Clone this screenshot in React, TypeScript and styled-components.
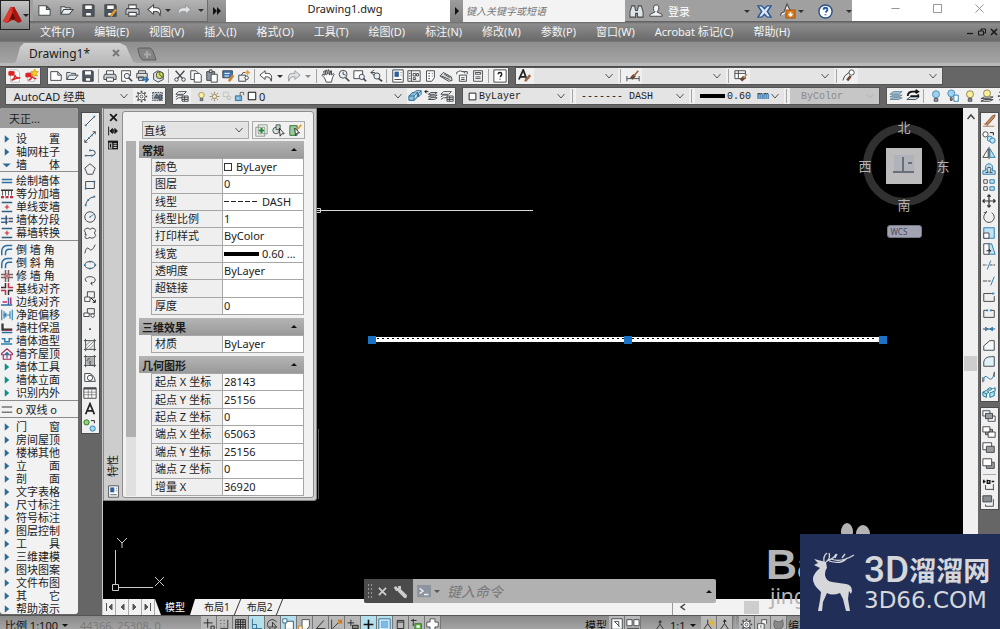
import React from 'react';
import styled, { createGlobalStyle, css } from 'styled-components';

const GlobalStyle = createGlobalStyle`
  * { box-sizing: border-box; }
  body { margin: 0; background: #666; overflow: hidden; }
  body, button, input, select {
    font-family: "Noto Sans", "Noto Sans CJK SC", sans-serif;
    font-size: 11px;
    color: #1c1c1c;
  }
  button, input, select { margin: 0; padding: 0; border: 0; border-radius: 0; background: none; outline: 0; }
`;

/* ---------- icons ---------- */

const K = '#464a4e';
const B = '#2f7fae';
const L = '#bfe3f3';

const glyphs: Record<string, React.ReactNode> = {
  new: <path d="M2 3h8l4 4v6H2zM10 3v4h4" fill="#fff" />,
  open: <path d="M2 12V4h4l1 1h5v2M2 12l3-5h10l-4 5z" fill="#e8eef2" />,
  save: <g><path d="M2 2h11l1 1v11H2z" fill="#4c5661" /><path d="M4 2h8v5H4zM5 10h6v4H5z" fill="#fff" /></g>,
  saveas: <g><path d="M2 2h11l1 1v11H2z" fill="#4c5661" /><path d="M4 2h8v5H4zM5 10h6v4H5z" fill="#fff" /><path d="M8 14l6-7" stroke="#e39a2c" strokeWidth="2.5" /></g>,
  print: <g><path d="M4 6V2h8v4" fill="#fff" /><path d="M2 6h12l1 2v4H1V8z" fill="#c9ccce" /><path d="M4 10h8v4H4z" fill="#fff" /></g>,
  preview: <g><path d="M13 8V2H3v12h5" fill="#fff" /><circle cx="9" cy="8" r="3" fill="#eef" /><path d="M11 10l4 4" strokeWidth="2" /></g>,
  publish: <g><path d="M4 5V2h8v3M2 5h12v5H2zM4 9h6v4H4z" fill="#dcdfe1" /><path d="M8 12h6M12 9l3 3-3 3" stroke="#2d6fb5" strokeWidth="2" /></g>,
  globe: <g><path d="M3 5l5-3 6 3v7l-6 3-5-3z" fill="#dde6ea" /><circle cx="10" cy="7" r="4" fill="#d5dd5b" /><path d="M10 3v4l3 2" stroke="#476b35" /></g>,
  undo: <path d="M7 2L1 7l6 5V9h3q3 0 4 5 2-9-4-9H7z" fill="#fff" />,
  redo: <path d="M9 2l6 5-6 5V9H6q-3 0-4 5-2-9 4-9h3z" fill="#dfe2e4" stroke="#9a9da0" />,
  cut: <g><path d="M3 2l8 9M13 2L5 11" strokeWidth="1.6" /><circle cx="4" cy="12" r="2" /><circle cx="12" cy="12" r="2" /></g>,
  copyclip: <g><path d="M2 2h6l2 2v8H2z" fill="#fff" /><path d="M6 5h6l2 2v8H6z" fill="#fff" /></g>,
  paste: <g><path d="M2 3h9v10H2z" fill="#8f969b" /><path d="M5 1h3v3H5z" fill="#ddd" /><path d="M7 6h7v9H7z" fill="#fff" /></g>,
  match: <g><path d="M2 2h11v8H2z" fill="#3b77b8" /><path d="M4 5h6M4 8h5" stroke="#fff" /><path d="M9 14l5-7" stroke="#c88235" strokeWidth="3" /></g>,
  block: <g><path d="M2 7h8v7H2zM5 7l2-3h3" /><circle cx="11" cy="10" r="2" fill="#fff" /><path d="M12 1v6M9 4h6M10 2l4 4M14 2l-4 4" stroke="#e2a050" /></g>,
  pan: <path d="M4 10L1 7l1-1 2 1L3 3l1-1 2 5-1-5 1-1 2 5V1h1l1 6 1-5h1v5l2-2 1 1-2 4-1 5H6z" fill="#fff" />,
  zoom: <g><circle cx="7" cy="6" r="4.500" fill="#e8f0f4" /><path d="M10 10l4 4" strokeWidth="2" /><path d="M7 3v3l3 1" /></g>,
  zoomwin: <g><path d="M1 2h10v9H1z" fill="#fff" /><circle cx="10" cy="9" r="3" fill="#eef" /><path d="M12 11l3 3" strokeWidth="2" /></g>,
  zoomprev: <g><circle cx="9" cy="8" r="3.500" fill="#e8f0f4" /><path d="M11 11l4 3" strokeWidth="2" /><path d="M6 1L2 4l4 3M2 4h5" /></g>,
  props: <g><path d="M2 1h12v14H2z" fill="#fff" /><path d="M4 3h5v6H4z" fill="#2f609c" stroke="none" /><path d="M11 4h1M11 7h1M4 12h8" /></g>,
  dcenter: <g><path d="M1 2h14v12H1z" fill="#fff" /><path d="M5 2v12M7 5h3v3H7zM11 5h2v3h-2zM7 10h3v2H7zM2 5h2M2 8h2M2 11h2" /></g>,
  palette: <g><path d="M4 2h9v8l-3 4H4z" fill="#fff" /><path d="M6 5h2M6 8h2M6 11h2M10 5h1M10 8h1" /></g>,
  sheet: <path d="M1 8l4-4 9 5 1 4-4 1zM3 8l9 4M6 6l7 4" fill="#ddd" />,
  markup: <g><path d="M2 6q-1-3 2-3 2-2 4 0 3-1 3 2M5 7h8v7H5z" fill="#fff" /><path d="M7 10h4M7 12h4M10 3h4v3" /></g>,
  calc: <g><path d="M3 2h10v12H3z" fill="#fff" /><path d="M5 4h6v2H5zM5 9h6M5 11h6" /></g>,
  help: <g><path d="M1 1h14v14H1z" fill="#fff" /><path d="M6 6q0-2 2-2t2 2q0 1-2 3M8 11v1" strokeWidth="1.700" stroke="#222" /></g>,
  pdf: <g><path d="M3 1h7l3 3v11H3z" fill="#fff" stroke="#bbb" /><path d="M1 3h6v4H1z" fill="#d22" stroke="#d22" /><path d="M4 13q4-3 4-6 1 4 6 3-5 0-10 3" stroke="#d22" strokeWidth="1.500" /></g>,
  pdfstar: <g><path d="M3 4h8v10H3z" fill="#fff" stroke="#bbb" /><path d="M1 5h6v4H1z" fill="#d22" stroke="#d22" /><path d="M4 13q4-2 4-5 1 3 5 3" stroke="#d22" strokeWidth="1.500" /><path d="M11 0l1 3 3 0-2 2 1 3-3-1-3 1 1-3-2-2 3 0z" fill="#ffd02c" stroke="#e0a010" /></g>,
  gear: <g><path d="M8 1v2M8 13v2M1 8h2M13 8h2M3 3l1.500 1.500M11.500 11.500L13 13M13 3l-1.500 1.500M3 13l1.500-1.500" strokeWidth="2" /><circle cx="8" cy="8" r="4.500" fill="#fff" /><circle cx="8" cy="8" r="1.800" /></g>,
  wsset: <g><path d="M2 3h12v10H2z" fill="#b9c2ca" strokeDasharray="2 1" /><path d="M4 10l3-5 3 5zM10 6h3v6h-3z" fill="#687685" /></g>,
  layers: <g><path d="M1 6l3-3h9l-3 3zM1 9l3-2h5M1 12l3-2h4" fill="#fff" /><path d="M8 8h7v6H8z" fill="#fff" /><path d="M8 10h7M8 12h7M11 8v6" /></g>,
  bulb: <g><circle cx="8" cy="6" r="4" fill="#fbf09a" stroke="#8e8450" /><path d="M6 11h4v3H6z" fill="#999" /></g>,
  bulbblue: <g><circle cx="8" cy="6" r="4" fill="#9fd0ee" stroke="#4d8fb8" /><path d="M6 11h4v3H6z" fill="#aaa" /></g>,
  bulbpage: <g><circle cx="6" cy="5" r="4" fill="#9fd0ee" stroke="#4d8fb8" /><path d="M5 10h2v3H5z" fill="#aaa" /><path d="M9 7h5v7H9z" fill="#fff" stroke={B} /></g>,
  bulblay: <g><path d="M1 11l4-2h10l-4 2zM1 14l4-2h10l-4 2z" fill="#ddd" /><circle cx="8" cy="5" r="4" fill="#fbf09a" stroke="#8e8450" /></g>,
  sun: <g><circle cx="8" cy="8" r="3" fill="#fdf0c0" stroke="#7c6a48" /><path d="M8 1v3M8 12v3M1 8h3M12 8h3M3 3l2 2M11 11l2 2M13 3l-2 2M3 13l2-2" stroke="#7c6a48" /></g>,
  frzvp: <g stroke="#b5b5b5"><path d="M2 2h8v7H2z" fill="#e4e4e4" /><circle cx="11" cy="11" r="3" fill="#ddd" /></g>,
  lock: <g><path d="M2 7h9v7H2z" fill="#6fb2dc" stroke="#255d83" /><path d="M9 7V2h5v4" /><path d="M6 9v3" stroke="#fff" /></g>,
  sq: <path d="M2 2h12v12H2z" fill="#fff" stroke="#111" strokeWidth="1.600" />,
  cubes: <g stroke="#286692"><path d="M1 8l4-4h6l-4 4zM1 8v5h6V8M7 13l4-4V4" fill="#8cc4e2" /><path d="M6 5l3-3h6l-3 3v4l3-3V2" fill="#b9def0" /></g>,
  layprev: <g><path d="M5 6l3-2h7l-3 2zM5 9l3-2h7l-3 2zM5 12l3-2h7l-3 2z" fill="#fff" /><path d="M1 3h4M1 3l2-2M1 3l2 2" stroke="#111" /></g>,
  stack: <path d="M1 6l4-3h10l-4 3zM1 9l4-2h10l-4 2zM1 12l4-2h10l-4 2z" fill="#9cc5dd" stroke="#6d8a9a" />,
  stackblk: <g><path d="M1 12l4-3h10l-4 3z" fill="#cfe6f2" /><path d="M2 8q0-5 6-5h5M11 1l3 2-3 2M5 8h9V6" stroke="#111" strokeWidth="2" /></g>,
  asty: <g><path d="M1 12L6 1l4 11M3 9h5" strokeWidth="2" stroke="#222" /><path d="M8 14l6-7" stroke="#9a6a48" strokeWidth="3" /></g>,
  dimsty: <g><path d="M1 8v6M15 8v6M1 11h14" /><path d="M6 11l4-4" stroke="#6e4630" strokeWidth="4" /><path d="M9 8l5-6" stroke="#9a6a48" strokeWidth="2" /></g>,
  tabsty: <g><path d="M1 2h12v9H1zM1 5h12M5 2v9" fill="#fff" /><path d="M8 13l4-4" stroke="#6e4630" strokeWidth="4" /><path d="M11 10l4-4" stroke="#c9a080" strokeWidth="2" /></g>,
  mlsty: <g><circle cx="11" cy="4" r="3" fill="#fff" /><path d="M1 13l2-5 5-4" /><path d="M6 13l4-5" stroke="#6e4630" strokeWidth="3" /></g>,

  line: <g><path d="M3 13L13 3" /><path d="M2 13h2M12 3h2" strokeWidth="2" stroke={B} /></g>,
  xline: <g><path d="M2 14L14 2M2 14v-3M2 14h3M14 2v3M14 2h-3" /><path d="M6 9h2M9 6h2" strokeWidth="2" stroke={B} /></g>,
  pline: <g><path d="M3 11h7q4 0 4-3t-3-3H8" /><path d="M2 11h2M7 5h2M9 11h2" strokeWidth="2" stroke={B} /></g>,
  poly: <path d="M8 2l6 5-3 7H5L2 7z" />,
  rect: <g><path d="M3 4h10v8H3z" /><path d="M2 12h2M12 4h2" strokeWidth="2" stroke={B} /></g>,
  arc: <g><path d="M3 13Q4 5 13 3" /><path d="M2 13h2M5 7h2M12 3h2" strokeWidth="2" stroke={B} /></g>,
  circle: <g><circle cx="8" cy="8" r="6" /><path d="M8 8l4-3M7 8h2" stroke={B} /></g>,
  cloud: <path d="M3 8Q0 5 3 3t5 1q2-3 5-1t0 5q3 3 0 5t-5 0q-3 2-5 1-2-2 1-4Q1 10 3 8z" />,
  spline: <path d="M2 13q2-9 5-5t7-5" />,
  ellipse: <g><ellipse cx="8" cy="8" rx="6" ry="4" /><path d="M1 8h2M13 8h2M7 4h2M7 12h2" strokeWidth="2" stroke={B} /></g>,
  ellarc: <path d="M4 9q-4-5 3-6 7 0 7 4 0 3-5 4M9 11l1-2M9 11l2 2" />,
  insert: <g><path d="M5 2h8v7H5z" /><path d="M2 8h6v5H2z" fill="#fff" /><path d="M9 9l5 5M14 14v-3M14 14h-3" stroke="#111" /></g>,
  mkblock: <g><path d="M5 3h8v6H5z" /><path d="M1 8h6v4H1z" fill="#fff" /><circle cx="11" cy="11" r="2" fill="#fff" /></g>,
  point: <path d="M7 8h2" strokeWidth="2" />,
  hatch: <g><path d="M1 3h14M1 13h14M3 1v14M13 1v14" /><path d="M3 9l6-6M3 13L13 3M7 13l6-6" stroke="#888" /></g>,
  gradient: <g><path d="M4 4h8v8H4z" fill="#aaa" stroke="none" /><path d="M1 3h14M1 13h14M3 1v14M13 1v14M4 8l4-4M8 8v5h5" /></g>,
  region: <g><path d="M2 13V4h6q5 2 6 9z" fill="#fff" /><circle cx="8" cy="9" r="3" /></g>,
  table: <g><path d="M1 2h14v12H1z" fill="#fff" /><path d="M1 3h14" strokeWidth="2" /><path d="M1 7h14M1 10h14M6 4v10M10 4v10" stroke="#888" /></g>,
  text: <path d="M3 14L8 2l5 12M5 10h6" strokeWidth="2" stroke="#222" />,
  addsel: <g><circle cx="4" cy="5" r="3" fill="#9bd080" stroke="#2b7b1e" /><path d="M9 3h4v3" stroke="#222" /><circle cx="11" cy="12" r="3" fill="#a8daf0" stroke={B} /></g>,

  erase: <g><path d="M4 11L12 2l3-1-1 3-7 8z" fill="#c98655" stroke="#8b5a38" /><path d="M2 11l5 3M1 14h13" stroke="#b08055" /></g>,
  copyobj: <g><circle cx="4" cy="5" r="3" fill="#fff" /><path d="M9 3h4v3" stroke="#111" /><circle cx="9" cy="10" r="3" fill={L} stroke={B} /><circle cx="12" cy="12" r="3" fill={L} stroke={B} /></g>,
  mirror: <g><path d="M7 3v10H1z" fill="#fff" /><path d="M9 3v10h6z" fill={L} stroke={B} /><path d="M8 1v14" /></g>,
  offset: <g><path d="M1 14v-4h3Q3 2 8 2t4 8h3v4z" fill={L} stroke={B} /><path d="M4 12h3Q4 6 8 6t1 6h3" /></g>,
  array: <g><path d="M2 2h4v4H2zM2 10h4v4H2z" fill="#fff" /><path d="M9 2h5v4H9zM9 10h5v4H9z" fill={L} stroke={B} /></g>,
  move: <path d="M8 1v14M1 8h14M6 3l2-2 2 2M6 13l2 2 2-2M3 6L1 8l2 2M13 6l2 2-2 2" stroke="#333" strokeWidth="1.400" />,
  rotate: <path d="M5 3a6 6 0 1 0 6 0M5 3V1M5 3H2" />,
  scale: <g><path d="M2 2h12v12H2z" fill={L} stroke={B} /><path d="M2 8h6v6H2z" fill="#fff" /></g>,
  stretch: <g><path d="M7 2h4l4 12H7z" fill={L} stroke={B} /><path d="M2 2h6v12H2z" fill="#fff" /><path d="M5 10h5M8 8l2 2-2 2" stroke="#222" /></g>,
  trim: <g><path d="M1 8h5M9 8h6" strokeDasharray="3 1" /><path d="M10 3L6 13" stroke={B} /></g>,
  extend: <g><path d="M1 8h9" strokeDasharray="5 1" /><path d="M14 3l-4 10" stroke={B} /></g>,
  brk1: <g><path d="M2 13V4h9M2 13h12V7" /><path d="M11 4h3" stroke={B} strokeWidth="2" /></g>,
  brk: <g><path d="M6 5H2v8h12V5h-4" /><path d="M5 5h2M9 5h2" strokeWidth="2" stroke={B} /></g>,
  join: <g><path d="M1 8h14" /><path d="M4 6l3 2-3 2zM12 6L9 8l3 2z" fill={B} stroke={B} /></g>,
  chamfer: <path d="M2 14V9l7-6h5v11z" fill="#f2fafd" />,
  fillet: <path d="M2 14V9q1-6 9-6h3v11z" fill="#def1f9" />,
  blend: <g><path d="M2 13q0-9 5-4t7-6" stroke={B} /><path d="M1 14V8M14 8V2" /></g>,
  explode: <path d="M1 7l4-2 3 2-3 2zM1 7v4l4 2V9M6 4l3-2 3 1-3 2zM9 8l5-2v5l-5 2zM13 3l2-1v4" fill={L} stroke="#197896" />,
  front: <g><path d="M1 2h8v6H1zM7 8h8v6H7z" fill="#fff" /><path d="M4 5h8v6H4z" fill="#9a9da0" /></g>,
  back: <g><path d="M4 5h8v6H4z" fill="#9a9da0" /><path d="M1 2h8v6H1zM7 8h8v6H7z" fill="#fff" /></g>,
  above: <g><path d="M1 2h10v8H1z" fill="#fff" /><path d="M5 6h9v7H5z" fill="#9a9da0" /></g>,
  under: <g><path d="M5 6h9v7H5z" fill="#9a9da0" /><path d="M1 2h10v8H1z" fill="#fff" /></g>,
  txtfront: <g><path d="M1 4h3M2 2v4M6 2v4h3V3H6M11 4h3" stroke="#111" strokeWidth="1.500" /><path d="M4 8v5h9M13 7v7" /></g>,
  hatchback: <g><path d="M1 2h10v7H1z" fill="#8a8d90" /><path d="M4 12v2h9V6" /></g>,

  wall: <path d="M1 6h14M1 10h14" stroke="#2d6fa5" strokeWidth="2" />,
  divide: <g><path d="M0 3h16" stroke="#333" strokeWidth="2" /><path d="M2 4v6M6 4v6M10 4v6M14 4v6" stroke="#444" /><path d="M0 12h4M6 12h4M12 12h4" stroke="#c42c48" strokeWidth="3" /></g>,
  single: <g><path d="M1 2h14M1 14h14" stroke="#2f5f83" strokeWidth="2" /><path d="M8 5v6M5 8h6" stroke="#d22a3c" strokeWidth="1.500" /></g>,
  seg: <g><path d="M0 6h9M0 11h9" stroke="#2d6fa5" strokeWidth="2" /><path d="M7 2v12M10 6h6M10 10h6" stroke="#46506e" strokeWidth="2" /></g>,
  corner: <path d="M1 15V9q1-7 8-7h6M6 15v-3q0-5 5-5h4" stroke="#2d6fa5" strokeWidth="2" />,
  cross: <g><path d="M0 6h6V0M16 6h-6V0M0 10h6v6M16 10h-6v6" stroke="#7a6060" strokeWidth="2" /><path d="M8 4v8M4 8h8" stroke="#c42c48" /></g>,
  base: <g><path d="M0 6h6V0M16 10h-6v6" stroke="#333" strokeWidth="2" /><path d="M16 6h-6V0M0 10h6v6" stroke="#c42c48" strokeWidth="2" /></g>,
  side: <g><path d="M0 12h15M10 12V2" stroke="#2d6fa5" strokeWidth="2" /><path d="M13 2v9M2 8h6" stroke="#c42c78" strokeWidth="2" /></g>,
  net: <path d="M1 1v14M15 1v14M4 3v10M5 8h7M12 3v10M7 5L5 8l2 3" stroke="#2d7fb5" strokeWidth="1.500" />,
  insul: <g><path d="M2 2v8h13" stroke="#333" strokeWidth="3" /><path d="M1 14h14" stroke="#2d6fa5" strokeWidth="2" /><path d="M5 11h9" stroke="#c42c48" /></g>,
  shape: <path d="M0 12h15M1 5h4v4h6V5h4" stroke="#2d7fb5" strokeWidth="2" />,
  roof: <g><path d="M0 8l8-7 8 7v1H0zM3 9v6h10V9" stroke="#a22c58" strokeWidth="1.500" /><path d="M8 14V6M5 9l3-3 3 3" stroke="#2d6fa5" strokeWidth="1.500" /></g>,
  dbl: <path d="M1 4h14M1 11h14" stroke="#777" strokeWidth="2" />,
  tri: <path d="M5 3l6 5-6 5z" fill="#2b6c9c" stroke="none" />,
  trig: <path d="M5 3l6 5-6 5z" fill="#0e8f86" stroke="none" />,
  trid: <path d="M2 6h11l-5.500 5z" fill="#2b6c9c" stroke="none" />,

  binoc: <path d="M1 14V8l2-6h3l1 5h2l1-5h3l2 6v6H9v-4H7v4z" fill="#dfe4e8" />,
  user: <path d="M8 1q4 0 3 5-1 3-2 3l6 3v2H1v-2l6-3q-2-1-2-4 0-4 3-4z" fill="#f2f4f5" />,
  exch: <path d="M1 2h4l3 3 3-3h4l-4 6 4 6h-4l-3-3-3 3H1l4-6z" fill="#d9e8f8" stroke="#2b5591" strokeWidth="1.500" />,
  a360: <g><path d="M1 13q-1-3 3-4l3-8 3 6" fill="#eee" /><path d="M6 7h9v8H6z" fill="#d97a1c" stroke="#a85808" /><path d="M10.500 9v4M8.500 11l2 2 2-2" stroke="#fff" strokeWidth="1.500" /></g>,
  qhelp: <g><circle cx="8" cy="8" r="7" fill="#fff" stroke="#2c4f86" strokeWidth="1.500" /><path d="M6 6q0-2 2-2t2 2q0 1-2 3M8 11v1" stroke="#2558a8" strokeWidth="2" /></g>,
  min: <path d="M3 8h10" stroke="#888" />,
  max: <path d="M3 3h10v10H3z" stroke="#888" />,
  close: <path d="M3 3l10 10M13 3L3 13" stroke="#888" />,
  dmin: <path d="M2 11h12" stroke="#151515" strokeWidth="2.500" />,
  drest: <path d="M6 6V2h9v8h-4M1 6h10v8H1z" stroke="#151515" strokeWidth="2" />,
  dclose: <path d="M2 2l12 12M14 2L2 14" stroke="#151515" strokeWidth="3" />,
  pin: <path d="M1 1v14M7 4L3 8l4 4zM11 4l4 4-4 4zM9 5v6" stroke="#151515" strokeWidth="1.500" fill="#151515" />,
  menu: <g><path d="M0 1h16v14H0z" fill="#181818" stroke="none" /><path d="M2 5h4v8H2zM9 6h5M9 9h5M9 12h5" stroke="#ddd" strokeWidth="1.500" /></g>,
  pickadd: <g><path d="M4 1h11v11H4zM1 4h11v11H1z" fill="#eef6ee" stroke="#879087" /><path d="M8 5v6M5 8h6" stroke="#218a35" strokeWidth="2.500" /></g>,
  selobj: <g><circle cx="5" cy="8" r="4" fill="#dbe8db" /><path d="M5 1h5v6H5z" fill="#bcd9bc" /><path d="M9 5l6 7h-3l-2 3z" fill="#fff" stroke="#222" /></g>,
  quick: <g><path d="M1 2h9v12H1z" fill="#9cc79c" stroke="#2e6f37" /><path d="M7 5l6 6h-3l-2 3z" fill="#fff" stroke="#222" /><path d="M11 6l4-5" stroke="#e59c1c" strokeWidth="2" /></g>,

  snap: <path d="M7 1v11M2 6h11M11 10h4v4h-4z" stroke="#222" />,
  dots: <path d="M3 3h1M7 3h1M3 7h1M7 7h1M3 11h1M7 11h1M12 2v11H3" stroke="#333" />,
  grid: <path d="M2 2h12v12H2zM2 5h12M2 8h12M2 11h12M5 2v12M8 2v12M11 2v12" stroke="#222" />,
  ortho: <path d="M3 1v12h12M3 8h5v5" stroke="#2c6a88" />,
  polar: <path d="M13 5a6 6 0 1 0 0 6M4 11h9L8 5M8 5v6" stroke="#333" />,
  osnap: <g><path d="M4 4h10v10H4z" fill="#fff" /><path d="M1 1h5v5H1z" stroke="#2c6a88" fill="#fff" /></g>,
  osnap3: <g><path d="M5 2h9v8l-3 4H5z" fill="#fff" /><path d="M1 10h4v4H1z" stroke="#d17b20" fill="#fff" /></g>,
  otrack: <path d="M12 3L3 13h11" stroke="#222" />,
  ducs: <g><path d="M2 2v12h12" stroke="#333" /><path d="M3 13l7-7" stroke="#333" /><path d="M10 7l4-4M10 3h4v4" stroke="#d17b20" strokeWidth="2" /></g>,
  dyn: <path d="M6 2v8M2 6h8M8 9h7v4H8z" stroke="#222" fill="#888" />,
  lwt: <path d="M8 2v12M2 8h12" stroke="#111" strokeWidth="2" />,
  tpy: <g><path d="M1 1h14v14H1z" fill="#d8eefa" stroke="#2c6a98" /><path d="M4 4h8v8H4z" fill="#7fbbe6" stroke="#4a8fc4" strokeDasharray="1 1" /></g>,
  qp: <path d="M4 3h8v10H4zM4 5h8" stroke="#222" />,
  sc: <g><path d="M1 3h7M4 1v9" stroke="#222" /><path d="M6 7h8v7H6z" fill="#62b54a" stroke="#2e7322" /><path d="M8 9h4v3H8z" fill="#fff" stroke="none" /></g>,
  plus: <path d="M5 1h6v4h4v6h-4v4H5v-4H1V5h4z" fill="#fff" />,
  sheetv: <g><path d="M2 2h12v12H2z" fill="#fff" /><path d="M5 5h5v6M5 5l6 6" /></g>,
  views: <path d="M1 3h6v7H1zM9 3h6v7H9zM1 13h14" fill="#fff" />,
  anno: <path d="M8 2v5l-5 7M8 7l5 7M6 4h4M8 2l2 2" stroke="#222" />,
  annoy: <g><path d="M7 2v5l-5 7M7 7l5 7" stroke="#222" /><path d="M12 1l-2 5h4l-3 5" stroke="#e7b51b" strokeWidth="2" /></g>,
  padlock: <path d="M2 7h8v7H2zM7 7V2h6v5M6 9v3" fill="#f4f4f4" />,
  orb: <path d="M3 3q7 4 10-1 3 12-5 12T3 3z" fill="#888" stroke="#666" />,
};

const Svg = styled.svg<{ $s: number }>`
  width: ${p => p.$s}px;
  height: ${p => p.$s}px;
  flex: none;
  display: block;
`;

const Icon = ({ n, s = 14 }: { n: string; s?: number }) => (
  <Svg $s={s} viewBox="0 0 16 16" fill="none" stroke={K} strokeWidth="1.100" aria-hidden="true">{glyphs[n]}</Svg>
);

/* ---------- shared parts ---------- */

const ToolButton = styled.button<{ $w?: number; $h?: number }>`
  width: ${p => p.$w ?? 16}px;
  height: ${p => p.$h ?? 16}px;
  flex: none;
  display: flex;
  align-items: center;
  justify-content: center;
`;

const Caret = styled.span<{ $c?: string }>`
  width: 0;
  height: 0;
  flex: none;
  border: 3px solid transparent;
  border-top-color: ${p => p.$c ?? '#333'};
  border-bottom: 0;
`;

const Divider = styled.span`
  width: 2px;
  height: 14px;
  margin: 0 2px;
  flex: none;
  border-left: 1px solid #a5a5a5;
`;

const Tool = ({ n, w, h, s }: { n: string; w?: number; h?: number; s?: number }) => (
  <ToolButton type="button" aria-label={n} $w={w} $h={h}><Icon n={n} s={s} /></ToolButton>
);

const Tools = ({ names, w, h, s }: { names: string; w?: number; h?: number; s?: number }) => (
  <>{names.split(' ').map((n, i) => (n === '|' ? <Divider key={i} /> : <Tool key={i} n={n} w={w} h={h} s={s} />))}</>
);

const ComboBox = styled.div<{ $w: number; $disabled?: boolean; $h?: number; $framed?: boolean }>`
  width: ${p => p.$w}px;
  height: ${p => p.$h ?? 16}px;
  flex: none;
  display: flex;
  align-items: center;
  gap: 2px;
  padding: 0 5px;
  background: ${p => (p.$disabled ? '#c6c6c6' : '#e4e4e4')};
  ${p => p.$framed && css`border: 1px solid #a9a9a9; padding: 0 5px 0 1px;`}
`;

const Select = styled.select<{ $mono?: boolean; $size?: number }>`
  appearance: none;
  flex: 1;
  min-width: 0;
  height: 100%;
  font-size: ${p => p.$size ?? 11}px;
  ${p => p.$mono && css`font-family: "Liberation Mono", monospace;`}
  &:disabled { color: #8a8a8a; opacity: 1; }
`;

const Chevron = ({ color = '#555' }: { color?: string }) => (
  <Svg $s={8} viewBox="0 0 8 8" fill="none" stroke={color} aria-hidden="true"><path d="M0.500 2L4 6l3.500-4" /></Svg>
);

type ComboProps = { w: number; h?: number; value?: string; label: string; mono?: boolean; size?: number; disabled?: boolean; framed?: boolean; children?: React.ReactNode };
const Combo = ({ w, h, value = '', label, mono, size, disabled, framed, children }: ComboProps) => (
  <ComboBox $w={w} $h={h} $disabled={disabled} $framed={framed}>
    {children}
    <Select aria-label={label} $mono={mono} $size={size} disabled={disabled}><option>{value}</option></Select>
    <Chevron color={disabled ? '#b4b4b4' : undefined} />
  </ComboBox>
);

/* ---------- header ---------- */

const Page = styled.div`
  position: relative;
  height: 100vh;
  min-height: 400px;
  display: flex;
  flex-direction: column;
  background: #666;
  overflow: hidden;
`;

const Header = styled.header`
  position: relative;
  background: linear-gradient(#a0a0a0 0 21px, #5b5b5b 21px, #8c8c8c 24px, #6b6b6b 40px);
`;

const AppButton = styled.button`
  position: absolute;
  left: 0;
  top: 0;
  width: 30px;
  height: 30px;
  display: flex;
  align-items: center;
  gap: 1px;
  padding-left: 2px;
  border: 1px solid #222;
  background: linear-gradient(#c4c4c4, #858585);
`;

const TitleRow = styled.div`
  display: flex;
  height: 22px;
  padding-left: 33px;
`;

const QuickAccess = styled.div`
  display: flex;
  align-items: center;
  width: 175px;
  background: linear-gradient(#b4b4b4, #939393);
  border: 1px solid #6c6c6c;
  border-top: 0;
  border-left: 0;
`;

const SmallDark = styled.button<{ $w: number }>`
  width: ${p => p.$w}px;
  display: flex;
  align-items: center;
  justify-content: center;
  background: linear-gradient(#9c9c9c, #808080);
`;

const RightCaret = styled.span`
  border: 4px solid transparent;
  border-left-color: #111;
  border-right: 0;
`;

const Title = styled.div`
  flex: 1;
  padding-left: 14px;
  background: #fff;
  text-align: center;
  font-size: 11px;
  line-height: 18px;
`;

const Search = styled.input`
  width: 162px;
  padding: 0 3px;
  background: #f3f3f3;
  font-size: 10px;
  font-style: italic;
  &::placeholder { color: #777; }
`;

const Account = styled.div`
  width: 227px;
  display: flex;
  align-items: center;
  padding-left: 3px;
`;

const SignIn = styled.button`
  display: flex;
  align-items: center;
  gap: 5px;
  margin: 0 auto 0 5px;
  color: #fff;
  white-space: nowrap;
`;

const WindowButtons = styled.div`
  width: 148px;
  height: 21px;
  display: flex;
  justify-content: space-around;
  align-items: flex-start;
  padding-left: 22px;
  background: #fff;
`;

const MenuRow = styled.nav`
  display: flex;
  align-items: center;
  height: 19px;
  padding: 0 0 0 40px;
  gap: 20px;
`;

const MenuItem = styled.button`
  color: #f4f4f4;
  font-size: 11px;
  line-height: 14px;
  white-space: nowrap;
`;

const DocButtons = styled.div`
  display: flex;
  margin-left: auto;
`;

const DocTabs = styled.div`
  display: flex;
  align-items: flex-end;
  height: 25px;
  padding-left: 12px;
  border-top: 1px solid #777;
  border-bottom: 3px solid #b9b9b9;
  background: linear-gradient(#8e8e8e, #a4a4a4);
`;

const DocTab = styled.div`
  display: flex;
  align-items: center;
  gap: 22px;
  width: 125px;
  height: 20px;
  padding-left: 17px;
  font-size: 12px;
  background: linear-gradient(#d2d2d2, #b9b9b9);
  clip-path: polygon(0 100%, 4px 95%, 8px 20%, 12px 0, 108px 0, 114px 15%, 121px 92%, 125px 100%);
`;

const NewTab = styled.button`
  width: 20px;
  height: 16px;
  display: flex;
`;

/* ---------- toolbars ---------- */

const Toolbars = styled.div`
  display: flex;
  flex-direction: column;
  gap: 4px;
  padding: 1px 0 4px;
  border-top: 1px solid #4a4a4a;
  background: #666;
`;

const ToolRow = styled.div`
  display: flex;
  gap: 8px;
  height: 16px;
  padding-left: 6px;
`;

const Bar = styled.div<{ $grow?: boolean }>`
  display: flex;
  align-items: center;
  flex: ${p => (p.$grow ? '1' : 'none')};
  background: #f0f0f0;
  outline: 1px solid #555;
  overflow: hidden;
`;

const DropArrow = styled.button`
  width: 12px;
  height: 16px;
  display: flex;
  align-items: center;
  justify-content: center;
`;

const Weight = styled.span<{ $w: number; $h: number }>`
  width: ${p => p.$w}px;
  height: ${p => p.$h}px;
  flex: none;
  background: #000;
`;

/* ---------- main area ---------- */

const Main = styled.main`
  flex: 1;
  min-height: 0;
  display: flex;
`;

const SidePalette = styled.aside`
  width: 78px;
  flex: none;
  display: flex;
  flex-direction: column;
  margin-bottom: 1px;
  border-radius: 3px;
  background: #f2f2f2;
  overflow: hidden;
`;

const SideTitle = styled.h2`
  margin: 0;
  padding: 2px 0 0 9px;
  height: 20px;
  flex: none;
  font-size: 11px;
  font-weight: 400;
  line-height: 17px;
  background: #9c9c9c;
`;

const SideGroup = styled.div<{ $first?: boolean }>`
  display: flex;
  flex-direction: column;
  flex: none;
  padding: ${p => (p.$first ? '4px 0 0' : '2px 0 1px')};
  border-bottom: 1px solid #8c8c8c;
`;

const SideItem = styled.button`
  display: flex;
  align-items: center;
  gap: 3px;
  height: 13px;
  padding-left: 1px;
`;

const SideLabel = styled.span`
  display: flex;
  justify-content: space-between;
  min-width: 44px;
  font-size: 11px;
  line-height: 13px;
  white-space: pre;
`;

const ToolColumn = styled.div<{ $w: number }>`
  width: ${p => p.$w}px;
  flex: none;
  display: flex;
  flex-direction: column;
  align-items: center;
  gap: 7px;
  padding-top: 5px;
`;

const VBar = styled.div`
  display: flex;
  flex-direction: column;
  width: 17px;
  background: #f0f0f0;
  outline: 1px solid #4c4c4c;
`;

const HRule = styled.span`
  height: 1px;
  margin: 2px 2px;
  background: #aaa;
`;

const Workspace = styled.div`
  position: relative;
  flex: 1;
  min-width: 0;
  display: flex;
  flex-direction: column;
  border-left: 1px solid #c8c8c8;
`;

const CanvasRow = styled.div`
  flex: 1;
  min-height: 0;
  display: flex;
`;

const Canvas = styled.div`
  position: relative;
  flex: 1;
  background: #000;
  overflow: hidden;
`;

const Drawing = styled.svg`
  position: absolute;
  left: 0;
  top: 0;
  width: 100%;
  height: 100%;
`;

const Ucs = styled.svg`
  position: absolute;
  left: 6px;
  bottom: 2px;
  width: 60px;
  height: 60px;
`;

const Cube = styled.div`
  position: absolute;
  right: 13px;
  top: 10px;
  width: 92px;
  display: flex;
  flex-direction: column;
  align-items: center;
  gap: 11px;
`;

const CubeArt = styled.svg`
  width: 92px;
  height: 96px;
  display: block;
`;

const Wcs = styled.button`
  width: 35px;
  height: 13px;
  border: 1px solid #77788a;
  border-radius: 3px;
  background: #a2a3b2;
  color: #4a4b5c;
  font-size: 8px;
  line-height: 10px;
  text-align: left;
  padding-left: 3px;
`;

const VScroll = styled.div`
  width: 15px;
  flex: none;
  display: flex;
  flex-direction: column;
  align-items: center;
  padding-top: 5px;
  background: #f0f0f0;
`;

const VThumb = styled.div`
  width: 13px;
  height: 15px;
  margin-top: 235px;
  background: #cdcdcd;
`;

const SheetRow = styled.div`
  display: flex;
  align-items: stretch;
  height: 16px;
  flex: none;
  background: #f2f2f2;
`;

const NavButton = styled.button`
  width: 13px;
  display: flex;
  align-items: center;
  justify-content: center;
  border-right: 1px solid #aaa;
`;

const SheetTab = styled.button<{ $active?: boolean }>`
  padding: 0 7px 0 9px;
  font-size: 10px;
  line-height: 15px;
  color: ${p => (p.$active ? '#fff' : '#222')};
  background: ${p => (p.$active ? '#000' : '#f2f2f2')};
  ${p => p.$active && css`
    padding: 0 10px;
    clip-path: polygon(0 0, 100% 0, calc(100% - 5px) 100%, 6px 100%);
  `}
`;

const Slash = styled.span`
  width: 1px;
  background: #333;
  transform: skewX(-22deg);
`;

const HScroll = styled.div`
  display: flex;
  align-items: center;
  width: 306px;
  margin-left: auto;
  padding-left: 6px;
  border-left: 1px solid #999;
`;

const HThumb = styled.span`
  width: 15px;
  height: 13px;
  margin-left: 57px;
  background: #cdcdcd;
`;

/* ---------- properties palette ---------- */

const Props = styled.section`
  position: absolute;
  left: 0;
  top: 0;
  width: 214px;
  display: flex;
  border: 1px solid #858585;
  border-radius: 0 0 3px 0;
  background: #cdcdcd;
`;

const PropsRail = styled.div`
  width: 18px;
  display: flex;
  flex-direction: column;
  align-items: center;
`;

const RailTitle = styled.span`
  margin: auto 0 5px;
  writing-mode: vertical-rl;
  text-orientation: sideways;
  transform: rotate(180deg);
  font-size: 11px;
  line-height: 16px;
`;

const PropsBody = styled.div`
  flex: 1;
  min-width: 0;
  margin: 2px 2px 2px 0;
  padding: 9px 9px 1px 3px;
  border: 1px solid #8d8d8d;
  border-radius: 3px;
  background: #f1f1f1;
`;

const PropsTop = styled.div`
  display: flex;
  gap: 3px;
  padding-left: 16px;
  margin-bottom: 2px;
`;

const PropsButtons = styled.div`
  display: flex;
  border: 1px solid #a9a9a9;
`;

const PropsContent = styled.div`
  display: flex;
  gap: 3px;
`;

const PropsScroll = styled.div`
  width: 10px;
  flex: none;
  background: linear-gradient(#b0b0b0 0 296px, #e0e0e0 296px);
`;

const Sections = styled.div`
  flex: 1;
  display: flex;
  flex-direction: column;
  gap: 3px;
`;

const SectionTitle = styled.button`
  width: 100%;
  height: 17px;
  display: flex;
  align-items: center;
  justify-content: space-between;
  padding: 0 7px 0 3px;
  background: linear-gradient(#b4b4b4, #9a9a9a);
  font-weight: 700;
`;

const UpCaret = styled.span`
  border: 3px solid transparent;
  border-bottom-color: #111;
  border-top: 0;
`;

const PropTable = styled.table<{ $h: number }>`
  width: calc(100% - 12px);
  height: ${p => p.$h}px;
  margin-left: 12px;
  table-layout: fixed;
  border-collapse: collapse;
  font-size: 11px;
  line-height: 14px;
  th, td { border: 1px solid #a6a6a6; padding: 0 0 0 1px; text-align: left; font-weight: 400; white-space: nowrap; overflow: hidden; }
  th { width: 71px; padding-left: 3px; background: #efefef; }
  td { background: #fff; }
`;

const Value = styled.span`
  display: flex;
  align-items: center;
  gap: 3px;
`;

const Swatch = styled.span`
  width: 8px;
  height: 8px;
  margin-right: 1px;
  border: 1px solid #333;
`;

const Dashes = styled.span`
  width: 35px;
  height: 1px;
  background: repeating-linear-gradient(90deg, #222 0 5px, transparent 5px 7px);
`;

/* ---------- command line, status bar, banner ---------- */

const Command = styled.div`
  position: absolute;
  left: 261px;
  bottom: 12px;
  width: 352px;
  height: 24px;
  display: flex;
  border-radius: 2px;
  overflow: hidden;
  background: #b1b1b1;
`;

const CommandHandle = styled.div`
  width: 49px;
  display: flex;
  align-items: center;
  gap: 6px;
  padding-left: 3px;
  background: #4b4b4b;
`;

const Dotted = styled.span`
  width: 5px;
  height: 16px;
  background: radial-gradient(circle, #999 0 1px, transparent 1px) 0 0 / 3px 4px;
`;

const CommandInput = styled.input`
  flex: 1;
  min-width: 0;
  padding-left: 7px;
  font-size: 14px;
  font-style: italic;
  &::placeholder { color: #777; }
`;

const Prompt = styled.span`
  display: flex;
  align-items: center;
  gap: 3px;
  padding-left: 4px;
`;

const ExpandButton = styled.button`
  display: flex;
  align-items: center;
  padding: 0 4px;
`;

const Status = styled.footer`
  display: flex;
  align-items: flex-start;
  height: 14px;
  flex: none;
  overflow: hidden;
  border-top: 1px solid #555;
  background: linear-gradient(#8a8a8a, #a4a4a4);
`;

const StatusText = styled.button<{ $w: number; $dim?: boolean; $pad?: number }>`
  width: ${p => p.$w}px;
  height: 18px;
  flex: none;
  display: flex;
  align-items: center;
  gap: 4px;
  padding-left: ${p => p.$pad ?? 0}px;
  white-space: pre;
  color: ${p => (p.$dim ? '#7a7a7a' : '#111')};
`;

const StatusButton = styled.button<{ $on?: boolean }>`
  width: 16px;
  height: 18px;
  flex: none;
  display: flex;
  align-items: center;
  justify-content: center;
  padding-bottom: 2px;
  border-right: 1px solid #777;
  background: ${p => (p.$on ? '#b4e0ee' : '#b8b8b8')};
`;

const Banner = styled.div`
  position: absolute;
  right: 0;
  bottom: 0;
  width: 200px;
  height: 95px;
  display: flex;
  align-items: center;
  padding: 0 0 0 11px;
  gap: 7px;
  background: #212f58;
  color: #d6d7da;
`;

const Deer = styled.svg`
  width: 46px;
  height: 60px;
  flex: none;
`;

const BannerText = styled.div`
  display: flex;
  flex-direction: column;
  gap: 2px;
  white-space: nowrap;
`;

const BannerName = styled.div`
  display: flex;
  align-items: center;
  height: 34px;
  font: 700 27px/34px "Noto Sans CJK SC", sans-serif;
`;

const BannerDigits = styled.span`
  font: 500 37px/38px Roboto, sans-serif;
`;

const BannerSite = styled.div`
  font: 400 23px/22px "DejaVu Sans", sans-serif;
`;

const Watermark = styled.div`
  position: absolute;
  right: 129px;
  bottom: 19px;
  width: 105px;
  height: 90px;
  padding-top: 22px;
  color: #b4b4b4;
`;

const WatermarkName = styled.div`
  font: 700 43px/44px "Liberation Sans", sans-serif;
`;

const WatermarkSub = styled.div`
  padding-left: 4px;
  font: 400 21px/20px "Noto Sans", sans-serif;
`;

const Ears = styled.svg`
  position: absolute;
  right: 0;
  top: 3px;
  width: 32px;
  height: 20px;
`;

/* ---------- data ---------- */

const menus = ['文件(F)', '编辑(E)', '视图(V)', '插入(I)', '格式(O)', '工具(T)', '绘图(D)', '标注(N)', '修改(M)', '参数(P)', '窗口(W)', 'Acrobat 标记(C)', '帮助(H)'];

const sideGroups: [string, string][][] = [
  [['tri', '设|置'], ['tri', '轴网柱子'], ['trid', '墙|体']],
  [['wall', '绘制墙体'], ['divide', '等分加墙'], ['single', '单线变墙'], ['seg', '墙体分段'], ['single', '幕墙转换']],
  [['corner', '倒 墙 角'], ['corner', '倒 斜 角'], ['cross', '修 墙 角'], ['base', '基线对齐'], ['side', '边线对齐'], ['net', '净距偏移'], ['insul', '墙柱保温'], ['shape', '墙体造型'], ['roof', '墙齐屋顶'], ['trig', '墙体工具'], ['trig', '墙体立面'], ['trig', '识别内外']],
  [['dbl', 'o 双线 o']],
  ['门|窗', '房间屋顶', '楼梯其他', '立|面', '剖|面', '文字表格', '尺寸标注', '符号标注', '图层控制', '工|具', '三维建模', '图块图案', '文件布图', '其|它', '帮助演示'].map(t => ['tri', t] as [string, string]),
];

type Row = [string, React.ReactNode];
const sections: { title: string; height: number; rows: Row[] }[] = [
  { title: '常规', height: 157, rows: [
    ['颜色', <Value><Swatch />ByLayer</Value>],
    ['图层', '0'],
    ['线型', <Value><Dashes />DASH</Value>],
    ['线型比例', '1'],
    ['打印样式', 'ByColor'],
    ['线宽', <Value><Weight $w={35} $h={4} />0.60 ...</Value>],
    ['透明度', 'ByLayer'],
    ['超链接', ''],
    ['厚度', '0'],
  ] },
  { title: '三维效果', height: 18, rows: [['材质', 'ByLayer']] },
  { title: '几何图形', height: 123, rows: [
    ['起点 X 坐标', '28143'], ['起点 Y 坐标', '25156'], ['起点 Z 坐标', '0'],
    ['端点 X 坐标', '65063'], ['端点 Y 坐标', '25156'], ['端点 Z 坐标', '0'],
    ['增量 X', '36920'],
  ] },
];

const statusModes: [string, boolean][] = [
  ['snap', false], ['dots', false], ['grid', false], ['ortho', true], ['polar', false], ['osnap', true], ['osnap3', false],
  ['otrack', false], ['ducs', false], ['dyn', false], ['lwt', true], ['tpy', true], ['qp', false], ['sc', false], ['plus', false],
];

/* ---------- views ---------- */

const PropertiesPalette = () => (
  <Props>
    <PropsRail>
      <Tool n="dclose" s={9} />
      <Tool n="pin" s={10} h={12} />
      <Tool n="menu" s={10} />
      <RailTitle>特性</RailTitle>
      <Tool n="props" s={13} h={18} />
    </PropsRail>
    <PropsBody>
      <PropsTop>
        <Combo w={107} h={18} label="对象" value="直线" framed />
        <PropsButtons><Tools names="pickadd selobj quick" w={17} s={13} /></PropsButtons>
      </PropsTop>
      <PropsContent>
        <PropsScroll />
        <Sections>
          {sections.map(sec => (
            <div key={sec.title}>
              <SectionTitle type="button">{sec.title}<UpCaret /></SectionTitle>
              <PropTable $h={sec.height}>
                <tbody>{sec.rows.map(([k, v]) => <tr key={k}><th scope="row">{k}</th><td>{v}</td></tr>)}</tbody>
              </PropTable>
            </div>
          ))}
        </Sections>
      </PropsContent>
    </PropsBody>
  </Props>
);

const ViewCube = () => (
  <Cube>
    <CubeArt viewBox="0 0 92 96" fontFamily='"Noto Sans CJK SC", sans-serif' fontSize="13" fill="#b4b4b4" textAnchor="middle">
      <circle cx="46" cy="47" r="37" fill="none" stroke="#303030" strokeWidth="8" />
      <path d="M28 30h36v36H28z" fill="#bcbcbc" />
      <path d="M36 37h20v18H36z" fill="#b0b3ba" />
      <path d="M45 39v15M35 54h21" stroke="#6a6e78" strokeWidth="2" />
      <path d="M50 45h4" stroke="#6a6e78" strokeWidth="2" />
      <text x="46" y="14">北</text>
      <text x="7" y="53">西</text>
      <text x="85" y="53">东</text>
      <text x="46" y="92">南</text>
    </CubeArt>
    <Wcs type="button">WCS</Wcs>
  </Cube>
);

const Workarea = () => (
  <Workspace>
    <CanvasRow>
      <Canvas>
        <Drawing fill="none" aria-hidden="true">
          <path d="M214 102.500h216" stroke="#d8d8d8" />
          <path d="M213.500 100.500h4v4h-4z" stroke="#d8d8d8" />
          <path d="M215.500 391v-70" stroke="#555" />
          <path d="M268 231.500h511" stroke="#fff" strokeWidth="5" />
          <path d="M274 230.500h500" stroke="#000" strokeDasharray="2 3" />
          <path d="M265 228h8v8h-8zM521 228h8v8h-8zM776 228h8v8h-8z" fill="#1a72c4" />
        </Drawing>
        <Ucs viewBox="0 0 60 60" fill="none" stroke="#ccc" aria-hidden="true">
          <path d="M6.500 13v34M10 50.500h34M3.500 47.500h6v6h-6zM8 1l5 5 5-5M13 6v5M46 40l9 9M55 40l-9 9" />
        </Ucs>
        <ViewCube />
      </Canvas>
      <VScroll>
        <Svg $s={8} viewBox="0 0 8 8" fill="none" stroke="#444" strokeWidth="1.500"><path d="M0.500 6L4 2l3.500 4" /></Svg>
        <VThumb />
      </VScroll>
    </CanvasRow>
    <SheetRow>
      {['M2.500 1v8M8 2L5 5l3 3z', 'M7 2L4 5l3 3z', 'M3 2l3 3-3 3z', 'M2 2l3 3-3 3zM7.500 1v8'].map(d => (
        <NavButton key={d} type="button" aria-label="布局导航"><Svg $s={10} viewBox="0 0 10 10" fill="#555" stroke="#555"><path d={d} /></Svg></NavButton>
      ))}
      <SheetTab type="button" $active>模型</SheetTab>
      <SheetTab type="button">布局1</SheetTab><Slash />
      <SheetTab type="button">布局2</SheetTab><Slash />
      <HScroll>
        <Svg $s={8} viewBox="0 0 8 8" fill="none" stroke="#444" strokeWidth="1.500"><path d="M6 1L2 4l4 3" /></Svg>
        <HThumb />
      </HScroll>
    </SheetRow>
    <PropertiesPalette />
    <Command>
      <CommandHandle>
        <Dotted />
        <Svg $s={9} viewBox="0 0 10 10" stroke="#ccc" strokeWidth="2"><path d="M1 1l8 8M9 1L1 9" /></Svg>
        <Svg $s={15} viewBox="0 0 16 16" stroke="#ccc" fill="none"><path d="M7 7l6 6" strokeWidth="4" strokeLinecap="round" /><path d="M2 3l2 3 3-1V2" strokeWidth="3" /></Svg>
      </CommandHandle>
      <Prompt>
        <Svg $s={14} viewBox="0 0 16 16" fill="#8e93a0" stroke="#eee"><path d="M0 1h16v14H0z" stroke="none" /><path d="M3 5l4 3-4 3M8 12h5" fill="none" strokeWidth="1.500" /></Svg>
        <Caret $c="#555" />
      </Prompt>
      <CommandInput aria-label="命令" placeholder="键入命令" />
      <ExpandButton type="button" aria-label="展开历史"><UpCaret /></ExpandButton>
    </Command>
  </Workspace>
);

export default function App() {
  return (
    <Page>
      <GlobalStyle />
      <Header>
        <TitleRow>
          <QuickAccess>
            <Tools names="new open save saveas print undo" w={22} h={20} s={15} />
            <Caret />
            <Tool n="redo" w={27} h={20} s={15} />
            <Caret />
          </QuickAccess>
          <SmallDark type="button" aria-label="更多" $w={18}><RightCaret /><RightCaret /></SmallDark>
          <Title>Drawing1.dwg</Title>
          <SmallDark type="button" aria-label="展开搜索" $w={13}><RightCaret /></SmallDark>
          <Search aria-label="搜索" placeholder="键入关键字或短语" />
          <Account>
            <Tool n="binoc" h={20} s={15} />
            <SignIn type="button"><Icon n="user" />登录</SignIn>
            <Caret />
            <Tool n="exch" w={28} h={20} s={15} />
            <Tool n="a360" w={20} h={20} s={16} />
            <Caret />
            <Tool n="qhelp" w={42} h={20} s={15} />
            <Caret />
          </Account>
          <WindowButtons>
            <Tool n="min" s={13} /><Tool n="max" s={13} /><Tool n="close" s={13} />
          </WindowButtons>
        </TitleRow>
        <MenuRow>
          {menus.map(m => <MenuItem key={m} type="button">{m}</MenuItem>)}
          <DocButtons><Tools names="dmin drest dclose" w={12} s={8} /></DocButtons>
        </MenuRow>
        <AppButton type="button" aria-label="应用程序菜单">
          <Svg $s={19} viewBox="0 0 20 20">
            <path d="M8 1L0 16l4 2 5-3h3l4 3 4-2-8-15z" fill="#a8160f" />
            <path d="M8 1L0 16l4 2 6-8V1z" fill="#dc3a2b" />
            <path d="M10 7l-3 7h6z" fill="#5e0d0a" />
          </Svg>
          <Caret $c="#222" />
        </AppButton>
      </Header>
      <DocTabs>
        <DocTab>Drawing1*<Svg $s={8} viewBox="0 0 8 8" stroke="#777" strokeWidth="2"><path d="M1 1l6 6M7 1L1 7" /></Svg></DocTab>
        <NewTab type="button" aria-label="新图形">
          <svg width="20" height="16" viewBox="0 0 20 16" fill="#858585" stroke="#5c5c5c"><path d="M1 2q0-1 1-1h11q3 1 6 12H6q-3 0-5-11z" /><path d="M10 4v7M7 7.500h7" stroke="#aaa" strokeWidth="2" /></svg>
        </NewTab>
      </DocTabs>
      <Toolbars>
        <ToolRow>
          <Bar><Tools names="pdf pdfstar" w={17} /></Bar>
          <Bar>
            <Tools names="new open save | print preview publish globe | cut copyclip paste match block | undo" />
            <DropArrow type="button" aria-label="放弃列表"><Caret /></DropArrow>
            <Tool n="redo" />
            <DropArrow type="button" aria-label="重做列表"><Caret $c="#888" /></DropArrow>
            <Tools names="| pan zoom zoomwin zoomprev | props dcenter palette sheet markup calc | help" />
          </Bar>
          <Bar>
            <Tool n="asty" w={18} /><Combo w={84} label="文字样式" /><Divider />
            <Tool n="dimsty" w={18} /><Combo w={84} label="标注样式" /><Divider />
            <Tool n="tabsty" w={18} /><Combo w={84} label="表格样式" /><Divider />
            <Tool n="mlsty" w={18} /><Combo w={84} label="多重引线样式" />
          </Bar>
        </ToolRow>
        <ToolRow>
          <Bar><Combo w={127} label="工作空间" value={'\u00a0AutoCAD 经典'} /><Tools names="gear wsset" s={13} /></Bar>
          <Bar>
            <Tool n="layers" w={18} />
            <Combo w={216} label="图层" value="0">
              <Icon n="bulb" s={11} /><Icon n="sun" s={11} /><Icon n="frzvp" s={10} /><Icon n="lock" s={11} /><Icon n="sq" s={10} />
            </Combo>
            <Tools names="cubes layprev layers" />
          </Bar>
          <Bar>
            <Combo w={107} label="颜色" value="ByLayer" mono size={10}><Icon n="sq" s={9} /></Combo><Divider />
            <Combo w={113} label="线型" value="------- DASH" mono size={10} /><Divider />
            <Combo w={89} label="线宽" value="0.60 mm" mono size={10}><Weight $w={25} $h={4} /></Combo><Divider />
            <Combo w={89} label="打印样式" value={'\u00a0ByColor'} mono size={10} disabled />
          </Bar>
          <Bar $grow><Tools names="stack stackblk | bulbblue bulbpage bulb bulblay gear" w={17} /></Bar>
        </ToolRow>
      </Toolbars>
      <Main>
        <SidePalette>
          <SideTitle>天正...</SideTitle>
          {sideGroups.map((g, i) => (
            <SideGroup key={i} $first={i === 0}>
              {g.map(([ic, t]) => (
                <SideItem key={t} type="button"><Icon n={ic} s={12} /><SideLabel>{t.split('|').map(x => <span key={x}>{x}</span>)}</SideLabel></SideItem>
              ))}
            </SideGroup>
          ))}
        </SidePalette>
        <ToolColumn $w={24}>
          <VBar><Tools w={17} names="line xline pline poly rect arc circle cloud spline ellipse ellarc insert mkblock point hatch gradient region table text addsel" /></VBar>
        </ToolColumn>
        <Workarea />
        <ToolColumn $w={22}>
          <VBar><Tools w={17} names="erase copyobj mirror offset array move rotate scale stretch trim extend brk1 brk join chamfer fillet blend explode" /></VBar>
          <VBar><Tools w={17} names="front back above under" /><HRule /><Tools w={17} names="txtfront hatchback" /></VBar>
        </ToolColumn>
      </Main>
      <Status>
        <StatusText type="button" $w={80} $pad={5}>比例 1:100<Caret $c="#111" /></StatusText>
        <StatusText type="button" $w={121} $dim>44366, 25308, 0</StatusText>
        {statusModes.map(([n, on]) => <StatusButton key={n} type="button" aria-label={n} $on={on}><Icon n={n} s={13} /></StatusButton>)}
        <StatusText type="button" $w={144} aria-label="状态栏" />
        <StatusText type="button" $w={24}>模型</StatusText>
        <StatusButton type="button" aria-label="布局"><Icon n="sheetv" /></StatusButton>
        <StatusButton type="button" aria-label="快速查看"><Icon n="views" /></StatusButton>
        <StatusText type="button" $w={60} $pad={13}><Icon n="anno" s={12} />1:1<Caret $c="#111" /></StatusText>
        <StatusButton type="button" aria-label="注释可见性"><Icon n="annoy" s={13} /></StatusButton>
        <StatusButton type="button" aria-label="注释比例"><Icon n="anno" s={13} /></StatusButton>
        <Divider />
        {['gear', 'padlock', 'orb'].map(n => <StatusButton key={n} type="button" aria-label={n}><Icon n={n} s={13} /></StatusButton>)}
        <StatusText type="button" $w={40} $pad={1}>编辑</StatusText>
      </Status>
      <Watermark>
        <Ears viewBox="0 0 32 20" fill="#b4b4b4" aria-hidden="true"><ellipse cx="8" cy="9" rx="6" ry="9" /><ellipse cx="24" cy="11" rx="7" ry="9" /></Ears>
        <WatermarkName>Ba</WatermarkName>
        <WatermarkSub>jing</WatermarkSub>
      </Watermark>
      <Banner>
        <Deer viewBox="0 0 46 60" fill="#d6d7da" aria-hidden="true">
          <path d="M3 7l8 2 4 1 1 6q-2 2-2 7 1 6 7 7l14 2q6 1 6 7l-1 3-2-3-1 8 2 12h-4l-3-12-3-6q-8 3-13 0l-4 9-1 9H7l2-11 1-8Q1 32 2 26q1-5 7-10l-6-3 4-2z" />
          <path d="M13 10q-1-6 3-9M15 10q5-4 3-9M16 9q8-3 9-7M20 7q10 4 23-4M24 6l2-4M31 6l3-4M18 9q12 4 18-3" fill="none" stroke="#d6d7da" strokeWidth="1.300" />
        </Deer>
        <BannerText>
          <BannerName><BannerDigits>3D</BannerDigits>溜溜网</BannerName>
          <BannerSite>3D66.COM</BannerSite>
        </BannerText>
      </Banner>
    </Page>
  );
}
